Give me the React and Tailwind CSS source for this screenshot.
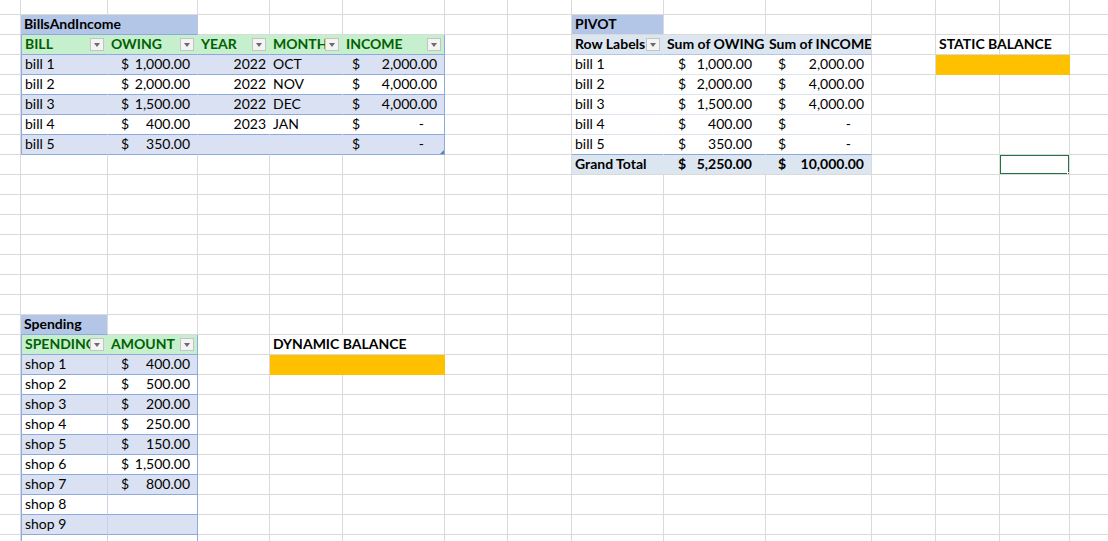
const COLS = [21, 87, 90, 72, 73, 102, 63, 64, 92, 102, 106, 64, 64, 70, 60];

const Drop = () => (
  <span className="absolute right-[3px] top-[3px] flex h-[13px] w-[14px] items-center justify-center border border-[#c4c4c4] bg-[#f4f4f4]">
    <span className="h-0 w-0 border-x-[3px] border-t-[4px] border-x-transparent border-t-[#6b6b6b]" />
  </span>
);

const Money = ({ v, pl = 'pl-[10px]', pr = 'pr-[7px]', bold }) => (
  <div className={`flex w-full justify-between ${pl} ${v === '-' ? 'pr-[20px]' : pr} ${bold ? 'font-bold' : ''}`}>
    <span>$</span>
    <span>{v}</span>
  </div>
);

const BLUE = 'border-b-[#8ea9db]';

// row -> { col: {span, c, cls} }
const rows = {};
const set = (r, c, cell) => {
  rows[r] = rows[r] || {};
  rows[r][c] = cell;
};

// BillsAndIncome table
set(1, 1, { span: 2, c: 'BillsAndIncome', cls: 'bg-[#b4c6e7] font-bold border-b-[#8ea9db] border-r-transparent' });
['BILL', 'OWING', 'YEAR', 'MONTH', 'INCOME'].forEach((h, i) =>
  set(2, i + 1, {
    c: h,
    drop: true,
    cls: `bg-[#c6efce] text-[#006100] font-bold ${BLUE} ${i === 0 ? 'border-l border-l-[#8ea9db]' : ''} ${i === 4 ? 'border-r-[#8ea9db]' : 'border-r-[#c6efce]'}`,
  })
);
const bills = [
  ['bill 1', '1,000.00', '2022', 'OCT', '2,000.00'],
  ['bill 2', '2,000.00', '2022', 'NOV', '4,000.00'],
  ['bill 3', '1,500.00', '2022', 'DEC', '4,000.00'],
  ['bill 4', '400.00', '2023', 'JAN', '-'],
  ['bill 5', '350.00', '', '', '-'],
];
bills.forEach((b, i) => {
  const r = 3 + i;
  const bg = i % 2 === 0 ? 'bg-[#d9e1f2] border-r-[#d9e1f2]' : 'bg-white border-r-white';
  set(r, 1, { c: b[0], cls: `${bg} ${BLUE} border-l border-l-[#8ea9db]` });
  set(r, 2, { c: <Money v={b[1]} />, cls: `${bg} ${BLUE}` });
  set(r, 3, { c: <div className="w-full pr-[3px] text-right">{b[2]}</div>, cls: `${bg} ${BLUE}` });
  set(r, 4, { c: b[3], cls: `${bg} ${BLUE}` });
  set(r, 5, {
    c: <Money v={b[4]} pl="pl-[6px]" />,
    cls: `${bg} ${BLUE} !border-r-[#8ea9db]`,
    corner: i === 4,
  });
});

// Pivot
set(1, 8, { c: 'PIVOT', cls: 'bg-[#b4c6e7] font-bold' });
set(2, 8, { c: 'Row Labels', drop: true, cls: 'bg-[#dce6f1] font-bold border-b-[#b4c6e7] border-r-[#dce6f1]' });
set(2, 9, { c: 'Sum of OWING', cls: 'bg-[#dce6f1] font-bold border-b-[#b4c6e7] border-r-[#dce6f1]' });
set(2, 10, { c: 'Sum of INCOME', cls: 'bg-[#dce6f1] font-bold border-b-[#b4c6e7]' });
bills.forEach((b, i) => {
  const r = 3 + i;
  const last = i === 4 ? 'border-b-[#8ea9db]' : 'border-b-[#dce6f1]';
  set(r, 8, { c: b[0], cls: `bg-white border-r-white ${last}` });
  set(r, 9, { c: <Money v={b[1]} pl="pl-[11px]" pr="pr-[13px]" />, cls: `bg-white border-r-white ${last}` });
  set(r, 10, { c: <Money v={b[4]} pl="pl-[9px]" />, cls: `bg-white ${last}` });
});
set(8, 8, { c: 'Grand Total', cls: 'bg-[#dce6f1] font-bold border-r-[#dce6f1]' });
set(8, 9, { c: <Money v="5,250.00" pl="pl-[11px]" pr="pr-[13px]" bold />, cls: 'bg-[#dce6f1] border-r-[#dce6f1]' });
set(8, 10, { c: <Money v="10,000.00" pl="pl-[9px]" bold />, cls: 'bg-[#dce6f1]' });

// Static balance
set(2, 12, { c: 'STATIC BALANCE', cls: 'font-bold whitespace-nowrap overflow-visible' });
set(3, 12, { span: 2, c: '', cls: 'bg-[#ffc000] border-r-transparent border-b-[#ffc000]' });
set(8, 13, { c: '', sel: true });

// Spending table
set(16, 1, { c: 'Spending', cls: 'bg-[#b4c6e7] font-bold border-b-[#8ea9db]' });
set(17, 1, { c: 'SPENDING', drop: true, cls: `bg-[#c6efce] text-[#006100] font-bold ${BLUE} border-l border-l-[#8ea9db] border-r-[#c6efce]` });
set(17, 2, { c: 'AMOUNT', drop: true, cls: `bg-[#c6efce] text-[#006100] font-bold ${BLUE} border-r-[#8ea9db]` });
const shops = ['400.00', '500.00', '200.00', '250.00', '150.00', '1,500.00', '800.00', '', '', ''];
shops.forEach((v, i) => {
  const r = 18 + i;
  const bg = i % 2 === 0 ? 'bg-[#d9e1f2]' : 'bg-white';
  set(r, 1, { c: i < 9 ? `shop ${i + 1}` : '', cls: `${bg} ${BLUE} border-l border-l-[#8ea9db] border-r-[#c8d2e6]` });
  set(r, 2, { c: v ? <Money v={v} /> : '', cls: `${bg} ${BLUE} border-r-[#8ea9db]` });
});

// Dynamic balance
set(17, 4, { span: 2, c: 'DYNAMIC BALANCE', cls: 'font-bold' });
set(18, 4, { span: 2, c: '', cls: 'bg-[#ffc000] border-r-transparent border-b-[#ffc000]' });

function Row({ r }) {
  const def = rows[r] || {};
  const out = [];
  for (let c = 0; c < COLS.length; c++) {
    const cell = def[c];
    const span = cell?.span || 1;
    const w = COLS.slice(c, c + span).reduce((a, b) => a + b, 0);
    out.push(
      <div
        key={c}
        style={{ width: w }}
        className={`relative flex shrink-0 items-end overflow-hidden whitespace-nowrap border-r border-b border-[#dadada] pb-[1px] pl-[3px] ${cell?.cls || ''}`}
      >
        {cell?.c}
        {cell?.drop && <Drop />}
        {cell?.corner && (
          <span className="absolute right-0 bottom-0 h-0 w-0 border-l-[4px] border-t-[4px] border-l-transparent border-t-transparent border-b-0 border-r-[4px] border-r-[#5b7fc0]" />
        )}
        {cell?.sel && (
          <span className="absolute -left-px -top-px h-[21px] w-[71px] border-2 border-[#217346]">
            <span className="absolute -right-[4px] -bottom-[4px] h-[5px] w-[5px] border border-white bg-[#217346]" />
          </span>
        )}
      </div>
    );
    c += span - 1;
  }
  return <div className={`flex ${r === 0 ? 'h-[15px]' : 'h-[20px]'}`}>{out}</div>;
}

export default function App() {
  return (
    <div
      className="h-[541px] w-[1108px] overflow-hidden bg-white text-[14px] leading-[18px] text-black"
      style={{ fontFamily: 'Lato, "Liberation Sans", sans-serif' }}
    >
      {Array.from({ length: 28 }, (_, r) => (
        <Row key={r} r={r} />
      ))}
    </div>
  );
}
